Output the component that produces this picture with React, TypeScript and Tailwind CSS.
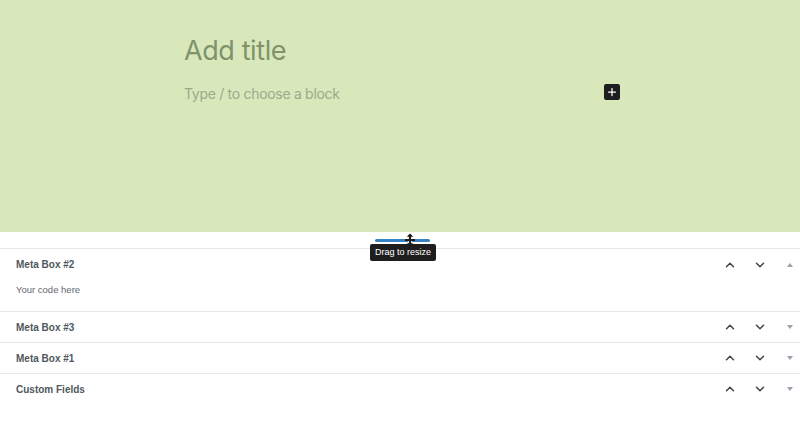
import React from 'react';
import { ChevronUp, ChevronDown, Plus } from 'lucide-react';

const boxes = [
  { title: 'Meta Box #2', open: true, body: 'Your code here' },
  { title: 'Meta Box #3', open: false },
  { title: 'Meta Box #1', open: false },
  { title: 'Custom Fields', open: false },
];

const Caret = ({ up }: { up: boolean }) => (
  <svg width="8" height="6" viewBox="0 0 8 6" className="text-gray-400">
    {up ? <path d="M4 1 L7 5 L1 5 Z" fill="currentColor" /> : <path d="M1 1 L7 1 L4 5 Z" fill="currentColor" />}
  </svg>
);

const App = () => {
  return (
    <div className="w-[800px] h-[421px] bg-white overflow-hidden" style={{ fontFamily: 'Inter, "Liberation Sans", sans-serif' }}>
      {/* Editor canvas */}
      <div className="h-[232px] bg-[#d8e8bb] pt-[33px] pl-[184px] pr-[180px]">
        <h1 className="text-[27px] leading-[36px] text-[#7f936b] font-normal tracking-[-0.4px]">Add title</h1>
        <div className="mt-[16px] flex items-center justify-between">
          <p className="text-[14px] leading-[18px] text-[#9aab8a] tracking-[-0.3px]">Type / to choose a block</p>
          <div className="w-4 h-4 bg-[#1e1e1e] rounded-[2px] flex items-center justify-center mt-[-4px]">
            <Plus className="w-3 h-3 text-white" strokeWidth={2.5} />
          </div>
        </div>
      </div>

      {/* Resize handle */}
      <div className="relative h-[17px] border-b border-[#e6e6e6]">
        <div className="absolute left-[375px] top-[7px] w-[55px] h-[3px] bg-[#3582c4] rounded-full" />
        <svg className="absolute left-[404px] top-[1px]" width="12" height="14" viewBox="0 0 12 14">
          <path d="M6 0 L10 4 L7.5 4 L7.5 10 L10 10 L6 14 L2 10 L4.5 10 L4.5 4 L2 4 Z" fill="#1e1e1e" stroke="white" strokeWidth="0.8" />
          <rect x="1" y="6" width="10" height="2" fill="#1e1e1e" />
        </svg>
        <div
          className="absolute left-[370px] top-[12px] z-10 bg-[#1e1e1e] text-white text-[9px] leading-[17px] px-[5px] rounded-[2px]"
          style={{ fontFamily: '"Liberation Sans", Arial, sans-serif' }}
        >
          Drag to resize
        </div>
      </div>

      {/* Meta boxes */}
      <div style={{ fontFamily: '"Liberation Sans", Arial, sans-serif' }}>
        {boxes.map((box, i) => (
          <div key={box.title} className={i < boxes.length - 1 ? 'border-b border-[#e6e6e6]' : ''}>
            <div className={`${box.open ? 'h-[31px]' : 'h-[30px]'} flex items-center pl-[16px] pr-[6px]`}>
              <span className="flex-1 text-[10px] font-bold text-[#50575e]">{box.title}</span>
              <ChevronUp className="w-[14px] h-[14px] text-[#3c434a] mr-[16px]" strokeWidth={2.5} />
              <ChevronDown className="w-[14px] h-[14px] text-[#3c434a] mr-[19px]" strokeWidth={2.5} />
              <Caret up={box.open} />
            </div>
            {box.open && (
              <div className="pl-[16px] pb-[15px] pt-[4px] text-[9.5px] leading-[12px] text-[#646970]">{box.body}</div>
            )}
          </div>
        ))}
      </div>
    </div>
  );
};

export default App;
